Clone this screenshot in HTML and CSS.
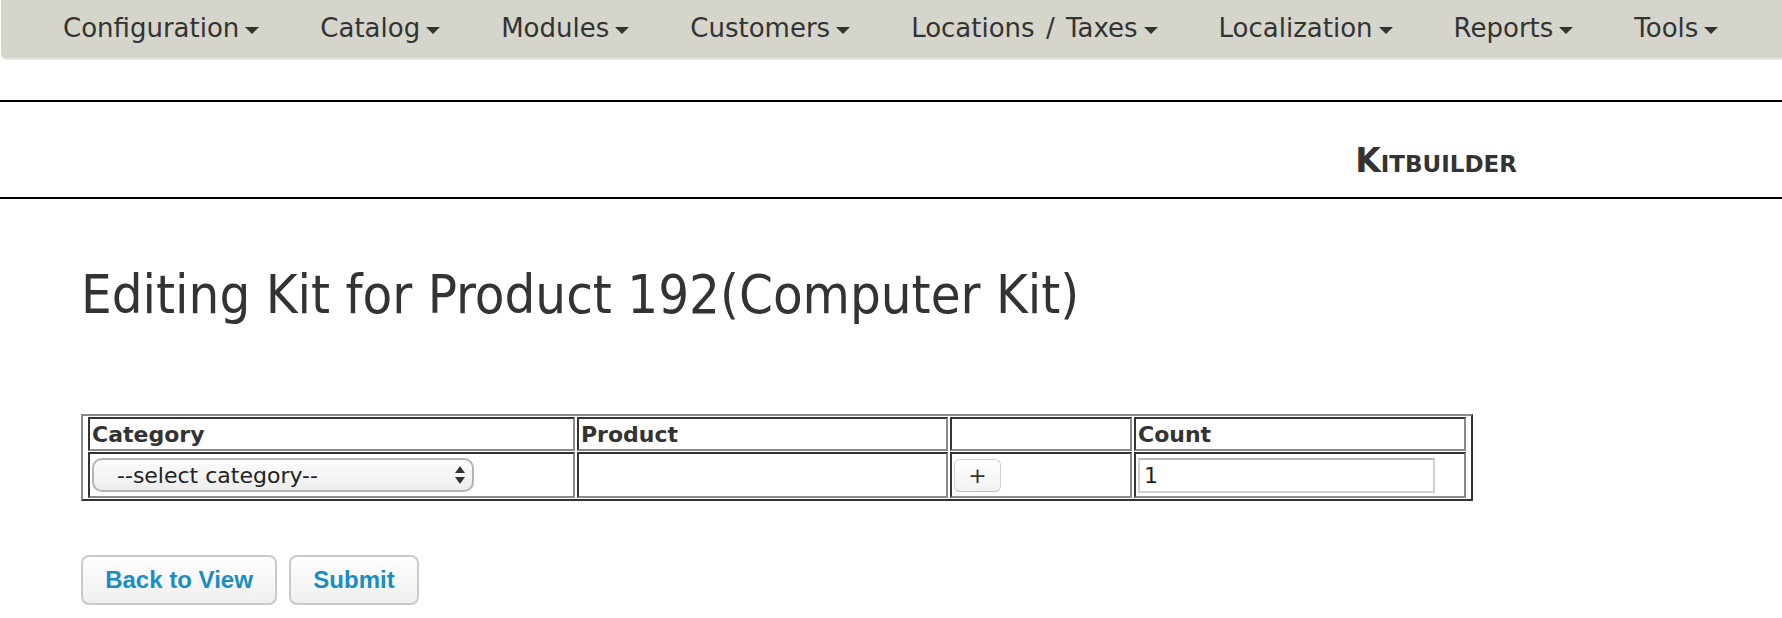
FILE: index.html
```html
<!DOCTYPE html>
<html lang="en">
<head>
  <meta charset="UTF-8">
  <meta name="viewport" content="width=device-width, initial-scale=1.0">
  <title>Kitbuilder</title>
  <link rel="stylesheet" href="styles.css">
</head>
<body>
  <nav class="topnav">
    <ul class="menu">
      <li><a href="#">Configuration<span class="caret"></span></a></li>
      <li><a href="#">Catalog<span class="caret"></span></a></li>
      <li><a href="#">Modules<span class="caret"></span></a></li>
      <li><a href="#">Customers<span class="caret"></span></a></li>
      <li><a href="#">Locations / Taxes<span class="caret"></span></a></li>
      <li><a href="#">Localization<span class="caret"></span></a></li>
      <li><a href="#">Reports<span class="caret"></span></a></li>
      <li><a href="#">Tools<span class="caret"></span></a></li>
    </ul>
  </nav>

  <div class="page-header">
    <h2 class="page-name">Kitbuilder</h2>
  </div>

  <div class="content">
    <h1 class="kit-title">Editing Kit for Product 192(Computer Kit)</h1>

    <table class="kit-table">
      <tr>
        <th class="col-category">Category</th>
        <th class="col-product">Product</th>
        <th class="col-add"></th>
        <th class="col-count">Count</th>
      </tr>
      <tr>
        <td>
          <span class="select-wrap">
            <select class="category-select">
              <option>--select category--</option>
            </select>
            <svg class="select-arrows" width="12" height="22" viewBox="0 0 12 22">
              <path d="M6 2 L11 9 L1 9 Z" fill="#333"/>
              <path d="M6 20 L11 13 L1 13 Z" fill="#333"/>
            </svg>
          </span>
        </td>
        <td></td>
        <td><button class="add-button">+</button></td>
        <td><input class="count-input" type="text" value="1"></td>
      </tr>
    </table>

    <div class="actions">
      <button class="action-button">Back to View</button>
      <button class="action-button">Submit</button>
    </div>
  </div>
</body>
</html>
```

FILE: styles.css
```css
body {
  margin: 0;
  font-family: "DejaVu Sans", Verdana, sans-serif;
  color: #333;
  background: #fff;
}

.topnav {
  margin-left: 1px;
  height: 58px;
  background-color: #d5d5cc;
  border-bottom: 2px solid #e4e4e0;
  border-bottom-left-radius: 6px;
}

.menu {
  list-style: none;
  margin: 0;
  padding: 0 0 0 62px;
  display: flex;
  gap: 61px;
  height: 100%;
  align-items: center;
}

.menu a {
  display: flex;
  align-items: center;
  text-decoration: none;
  color: #333;
  font-size: 26px;
  line-height: 30px;
  word-spacing: 3px;
  white-space: nowrap;
  padding-bottom: 2px;
}

.caret {
  display: inline-block;
  width: 0;
  height: 0;
  margin-left: 6px;
  margin-top: 4px;
  border-top: 7px solid #333;
  border-left: 7px solid transparent;
  border-right: 7px solid transparent;
}

.page-header {
  margin-top: 40px;
  border-top: 2px solid #000;
  border-bottom: 2px solid #000;
  display: flex;
  justify-content: flex-end;
  padding: 43px 265px 20px 0;
}

.page-name {
  margin: 0;
  font-size: 33px;
  line-height: 32px;
  font-weight: bold;
  font-variant: small-caps;
  color: #333;
}

.content {
  padding: 0 81px;
}

.kit-title {
  margin: 66px 0 0;
  font-size: 54px;
  font-stretch: condensed;
  font-weight: normal;
  line-height: 1.1;
  color: #333;
}

.kit-table {
  margin-top: 90px;
  width: 1392px;
  table-layout: fixed;
  border-collapse: separate;
  border-spacing: 2px 1px;
  padding: 0 3px;
  border: 2px solid;
  border-color: #8a8a8a #333 #333 #8a8a8a;
}

.kit-table th,
.kit-table td {
  box-sizing: border-box;
  border: 2px solid;
  border-color: #333 #8a8a8a #8a8a8a #333;
  padding: 0 2px;
  text-align: left;
  vertical-align: middle;
}

.kit-table th {
  height: 34px;
  font-size: 22px;
  font-weight: bold;
  color: #333;
}

.kit-table td {
  height: 46px;
}

.col-category { width: 487px; }
.col-product { width: 371px; }
.col-add { width: 182px; }
.col-count { width: 332px; }

.select-wrap {
  position: relative;
  display: inline-block;
  vertical-align: middle;
}

.category-select {
  appearance: none;
  -webkit-appearance: none;
  box-sizing: border-box;
  width: 382px;
  height: 34px;
  padding: 0 30px 0 23px;
  border: 2px solid #b4b4b4;
  border-radius: 10px;
  background: linear-gradient(#fcfcfc, #ededed);
  font-family: "DejaVu Sans", Verdana, sans-serif;
  font-size: 22px;
  color: #222;
  display: block;
}

.select-arrows {
  position: absolute;
  right: 8px;
  top: 6px;
  pointer-events: none;
}

.add-button {
  display: block;
  width: 47px;
  height: 33px;
  padding: 0;
  border: 1px solid #cfcfcf;
  border-bottom-color: #bdbdbd;
  border-radius: 6px;
  background: linear-gradient(#ffffff, #f1f1f1);
  font-family: "DejaVu Sans", Verdana, sans-serif;
  font-size: 22px;
  color: #333;
}

.count-input {
  display: block;
  box-sizing: border-box;
  width: 297px;
  height: 35px;
  margin-left: 0;
  padding: 0 4px;
  border: 2px solid #d0d0d0;
  border-top-color: #b5b5b5;
  font-family: "DejaVu Sans", Verdana, sans-serif;
  font-size: 22px;
  color: #222;
}

.actions {
  display: flex;
  gap: 12px;
  margin-top: 54px;
}

.action-button {
  box-sizing: border-box;
  height: 50px;
  padding: 0;
  white-space: nowrap;
  border: 2px solid #cacaca;
  border-radius: 8px;
  background: linear-gradient(#ffffff, #f7f7f7 50%, #efefef);
  font-family: "Liberation Sans", Arial, sans-serif;
  font-weight: bold;
  font-size: 24px;
  color: #1b8dc4;
}

.action-button:first-child {
  width: 196px;
}

.action-button:last-child {
  width: 130px;
}
```
